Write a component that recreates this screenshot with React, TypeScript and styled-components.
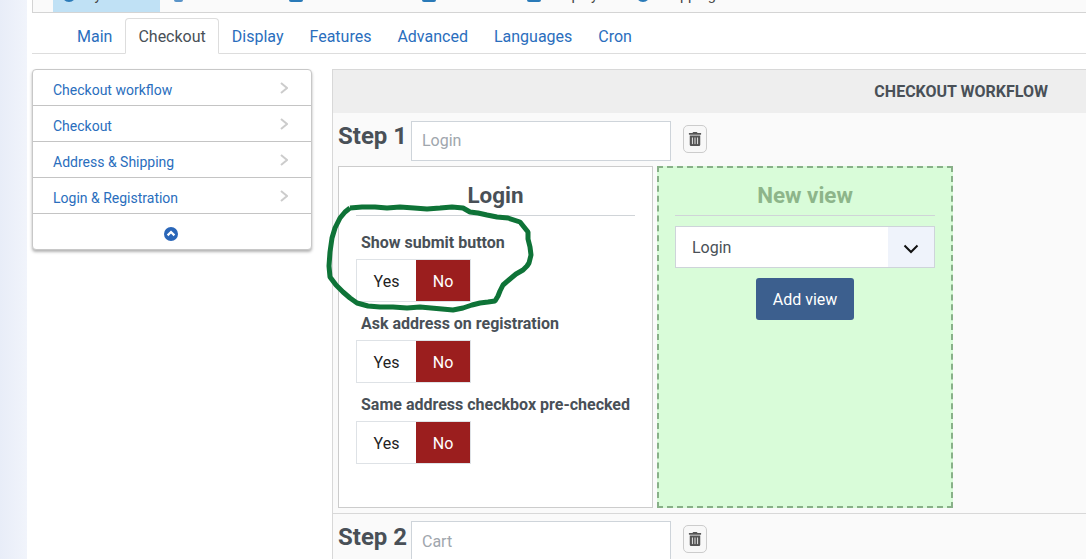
import { FC } from "react";
import styled, { createGlobalStyle } from "styled-components";
import { FaTrashAlt } from "react-icons/fa";

const GlobalStyle = createGlobalStyle`
  html, body {
    margin: 0;
    height: 559px;
    overflow: hidden;
    background: #fff;
    font-family: Roboto, "Liberation Sans", sans-serif;
    color: #495057;
  }
  * {
    box-sizing: border-box;
  }
`;

const toolbarItems = [
  { label: "System", icon: "round", active: true },
  { label: "Products", icon: "dots" },
  { label: "Customers", icon: "square" },
  { label: "Orders", icon: "square" },
  { label: "Display", icon: "square" },
  { label: "Shipping", icon: "round" },
];

const tabs = ["Main", "Checkout", "Display", "Features", "Advanced", "Languages", "Cron"];
const menuItems = ["Checkout workflow", "Checkout", "Address & Shipping", "Login & Registration"];
const loginFields = ["Show submit button", "Ask address on registration", "Same address checkbox pre-checked"];

// hand drawn marker line round the first toggle
const scribblePoints =
  "350,208 362,207 375,207 387,208 400,207 414,208 427,209 440,208 452,207 463,208 470,212 478,213 487,215 " +
  "497,217 508,218 520,222 524,227 528,232 528,239 530,247 531,255 529,263 527,266 523,270 516,274 510,279 " +
  "503,285 500,291 498,296 495,301 488,302 480,303 472,305 463,308 453,310 442,309 431,308 420,307 407,308 " +
  "393,307 380,307 368,306 357,303 350,298 343,292 336,285 330,277 329,266 330,252 332,238 335,228 340,218 345,212 350,208";

const Step: FC<{ name: string; placeholder: string; $lower?: boolean }> = ({ name, placeholder, $lower }) => (
  <StepRow $lower={$lower}>
    <StepLabel $lower={$lower}>{name}</StepLabel>
    <StepInput placeholder={placeholder} readOnly $lower={$lower} />
    <TrashButton>
      <FaTrashAlt />
    </TrashButton>
  </StepRow>
);

export default function App() {
  return (
    <Page>
      <GlobalStyle />
      <Gutter />
      <Content>
        <Toolbar>
          {toolbarItems.map((item) => (
            <ToolbarItem key={item.label} $active={item.active}>
              <ToolbarIcon $kind={item.icon} />
              {item.label}
            </ToolbarItem>
          ))}
        </Toolbar>

        <TabBar>
          {tabs.map((tab) => (
            <Tab key={tab} $active={tab === "Checkout"}>
              {tab}
            </Tab>
          ))}
        </TabBar>

        <Columns>
          <SideMenu>
            {menuItems.map((item) => (
              <MenuRow key={item}>
                {item}
                <MenuChevron viewBox="0 0 8 12">
                  <polyline points="1,1 7,6 1,11" />
                </MenuChevron>
              </MenuRow>
            ))}
            <CollapseRow>
              <svg width="14" height="14" viewBox="0 0 14 14">
                <circle cx="7" cy="7" r="7" fill="#2a66b8" />
                <polyline points="3.6,8.4 7,5 10.4,8.4" fill="none" stroke="#fff" strokeWidth="2.2" />
              </svg>
            </CollapseRow>
          </SideMenu>

          <Workflow>
            <WorkflowHeader>CHECKOUT WORKFLOW</WorkflowHeader>
            <Step name="Step 1" placeholder="Login" />
            <Views>
              <ViewCard>
                <ViewTitle>Login</ViewTitle>
                {loginFields.map((field) => (
                  <Field key={field}>
                    <FieldLabel>{field}</FieldLabel>
                    <Toggle>
                      <ToggleYes>Yes</ToggleYes>
                      <ToggleNo>No</ToggleNo>
                    </Toggle>
                  </Field>
                ))}
              </ViewCard>
              <NewViewCard>
                <ViewTitle $muted>New view</ViewTitle>
                <SelectBox>
                  <SelectValue>Login</SelectValue>
                  <SelectArrow>
                    <svg width="16" height="10" viewBox="0 0 16 10">
                      <polyline points="1.5,1.5 8,8 14.5,1.5" fill="none" stroke="#111" strokeWidth="2" />
                    </svg>
                  </SelectArrow>
                </SelectBox>
                <AddButton>Add view</AddButton>
              </NewViewCard>
            </Views>
            <StepDivider />
            <Step name="Step 2" placeholder="Cart" $lower />
          </Workflow>
        </Columns>
      </Content>

      <Scribble viewBox="0 0 1086 559">
        <polyline points={scribblePoints} />
      </Scribble>
    </Page>
  );
}

const Page = styled.div`
  position: relative;
  display: flex;
  width: 1086px;
  height: 559px;
  overflow: hidden;
`;

const Gutter = styled.div`
  flex: 0 0 27px;
  background: linear-gradient(90deg, #e8edf8, #f1f4fb);
`;

const Content = styled.div`
  flex: 1;
  min-width: 0;
  padding-left: 5px;
`;

const Toolbar = styled.div`
  display: flex;
  align-items: stretch;
  gap: 5px;
  height: 13px;
  padding-left: 20px;
  overflow: hidden;
  background: #fafafa;
  border-left: 1px solid #d4d4d4;
  border-bottom: 1px solid #d4d4d4;
`;

const ToolbarItem = styled.div<{ $active?: boolean }>`
  display: flex;
  align-items: flex-end;
  gap: 10px;
  padding: 0 ${({ $active }) => ($active ? "26px" : "24px")} 9px 9px;
  font-size: 14.5px;
  line-height: 1;
  white-space: nowrap;
  color: #444;
  background: ${({ $active }) => ($active ? "#c0e1f5" : "transparent")};
`;

const ToolbarIcon = styled.span<{ $kind: string }>`
  width: ${({ $kind }) => ($kind === "dots" ? "9px" : "14px")};
  height: 14px;
  margin-bottom: 1px;
  flex: none;
  background: ${({ $kind }) => ($kind === "dots" ? "#5a94c8" : "#2a7ab8")};
  border-radius: ${({ $kind }) => ($kind === "round" ? "50%" : "2px")};
`;

const TabBar = styled.div`
  display: flex;
  height: 36px;
  margin-top: 5px;
  padding-left: 32px;
  border-bottom: 1px solid #ddd;
`;

const Tab = styled.div<{ $active?: boolean }>`
  height: 36px;
  padding: 0 12px;
  font-size: 16px;
  line-height: 35px;
  color: ${({ $active }) => ($active ? "#495057" : "#2a6ebd")};
  background: ${({ $active }) => ($active ? "#fff" : "transparent")};
  border: 1px solid ${({ $active }) => ($active ? "#ddd" : "transparent")};
  border-bottom-color: ${({ $active }) => ($active ? "#fff" : "transparent")};
  border-radius: 4px 4px 0 0;
`;

const Columns = styled.div`
  display: flex;
  align-items: flex-start;
  gap: 20px;
  margin-top: 15px;
`;

const SideMenu = styled.div`
  flex: 0 0 280px;
  background: #fff;
  border: 1px solid #c8c8c8;
  border-radius: 4px;
  box-shadow: 0 2px 3px rgba(0, 0, 0, 0.3);
`;

const MenuRow = styled.div`
  display: flex;
  align-items: center;
  justify-content: space-between;
  height: 36px;
  padding: 4px 23px 0 20px;
  font-size: 14px;
  color: #2a6ebd;
  border-bottom: 1px solid #c4c4c4;
`;

const MenuChevron = styled.svg`
  width: 8px;
  height: 12px;
  margin-bottom: 3px;
  fill: none;
  stroke: #cccccc;
  stroke-width: 2;
`;

const CollapseRow = styled.div`
  display: flex;
  align-items: center;
  justify-content: center;
  height: 35px;
  padding-top: 5px;
  margin-left: -2px;
`;

const Workflow = styled.div`
  flex: 1;
  min-width: 0;
  height: 490px;
  background: #fafafa;
  border-top: 1px solid #d8d8d8;
  border-left: 1px solid #d8d8d8;
`;

const WorkflowHeader = styled.div`
  height: 43px;
  padding-right: 38px;
  font-size: 16px;
  font-weight: 700;
  line-height: 43px;
  text-align: right;
  color: #495057;
  background: #eeeeee;
`;

const StepRow = styled.div<{ $lower?: boolean }>`
  display: flex;
  align-items: center;
  padding: ${({ $lower }) => ($lower ? "7px" : "8px")} 0 5px 5px;
`;

const StepLabel = styled.div<{ $lower?: boolean }>`
  flex: 0 0 73px;
  margin-top: ${({ $lower }) => ($lower ? "-8px" : "-10px")};
  font-size: 24px;
  font-weight: 700;
  color: #495057;
`;

const StepInput = styled.input<{ $lower?: boolean }>`
  width: 260px;
  height: 40px;
  padding: 0 10px ${({ $lower }) => ($lower ? "0" : "2px")};
  font-family: inherit;
  font-size: 16px;
  background: #fff;
  border: 1px solid #ced4da;
  border-radius: 0;
  outline: none;
  &::placeholder {
    color: #a0a6ad;
    opacity: 1;
  }
`;

const TrashButton = styled.div`
  display: flex;
  align-items: center;
  justify-content: center;
  width: 24px;
  height: 28px;
  margin: 0 0 4px 12px;
  font-size: 14px;
  color: #555;
  background: #f8f8f8;
  border: 1px solid #ccc;
  border-radius: 5px;
`;

const Views = styled.div`
  display: flex;
  gap: 4px;
  height: 342px;
  padding-left: 5px;
`;

const ViewCard = styled.div`
  flex: 0 0 315px;
  padding: 0 17px;
  background: #fff;
  border: 1px solid #ccc;
`;

const NewViewCard = styled.div`
  flex: 0 0 296px;
  padding: 0 16px;
  background: #d9fcd9;
  border: 2px dashed #88b088;
  display: flex;
  flex-direction: column;
`;

const ViewTitle = styled.div<{ $muted?: boolean }>`
  height: ${({ $muted }) => ($muted ? "48px" : "49px")};
  margin-bottom: 10px;
  font-size: 22.4px;
  font-weight: 700;
  line-height: ${({ $muted }) => ($muted ? "55px" : "57px")};
  text-align: center;
  color: ${({ $muted }) => ($muted ? "#8db58a" : "#495057")};
  border-bottom: 1px solid #d0d4d8;
`;

const Field = styled.div`
  height: 81px;
  padding-top: 7px;
`;

const FieldLabel = styled.div`
  height: 20px;
  padding-left: 5px;
  font-size: 16px;
  font-weight: 700;
  line-height: 20px;
  white-space: nowrap;
  color: #495057;
`;

const Toggle = styled.div`
  display: flex;
  width: 115px;
  height: 43px;
  margin-top: 6px;
  font-size: 16px;
  line-height: 43px;
  text-align: center;
  border: 1px solid #dee2e6;
`;

const ToggleYes = styled.div`
  flex: 0 0 59px;
  color: #222;
  background: #fff;
`;

const ToggleNo = styled.div`
  flex: 1;
  color: #fff;
  background: #9b1e1e;
`;

const SelectBox = styled.div`
  display: flex;
  height: 42px;
  background: #fff;
  border: 1px solid #ced4da;
`;

const SelectValue = styled.div`
  flex: 1;
  padding-left: 16px;
  font-size: 16px;
  line-height: 42px;
  color: #495057;
`;

const SelectArrow = styled.div`
  display: flex;
  align-items: center;
  justify-content: center;
  flex: 0 0 46px;
  padding-top: 4px;
  background: #eff3fb;
`;

const AddButton = styled.div`
  align-self: center;
  width: 98px;
  height: 42px;
  margin-top: 10px;
  font-size: 16px;
  line-height: 44px;
  text-align: center;
  color: #fff;
  background: #3c5f8e;
  border-radius: 3px;
`;

const StepDivider = styled.div`
  height: 1px;
  margin-top: 5px;
  background: #d8d8d8;
`;

const Scribble = styled.svg`
  position: absolute;
  top: 0;
  left: 0;
  width: 1086px;
  height: 559px;
  pointer-events: none;
  fill: none;
  stroke: #0e7337;
  stroke-width: 5;
  stroke-linejoin: bevel;
`;
